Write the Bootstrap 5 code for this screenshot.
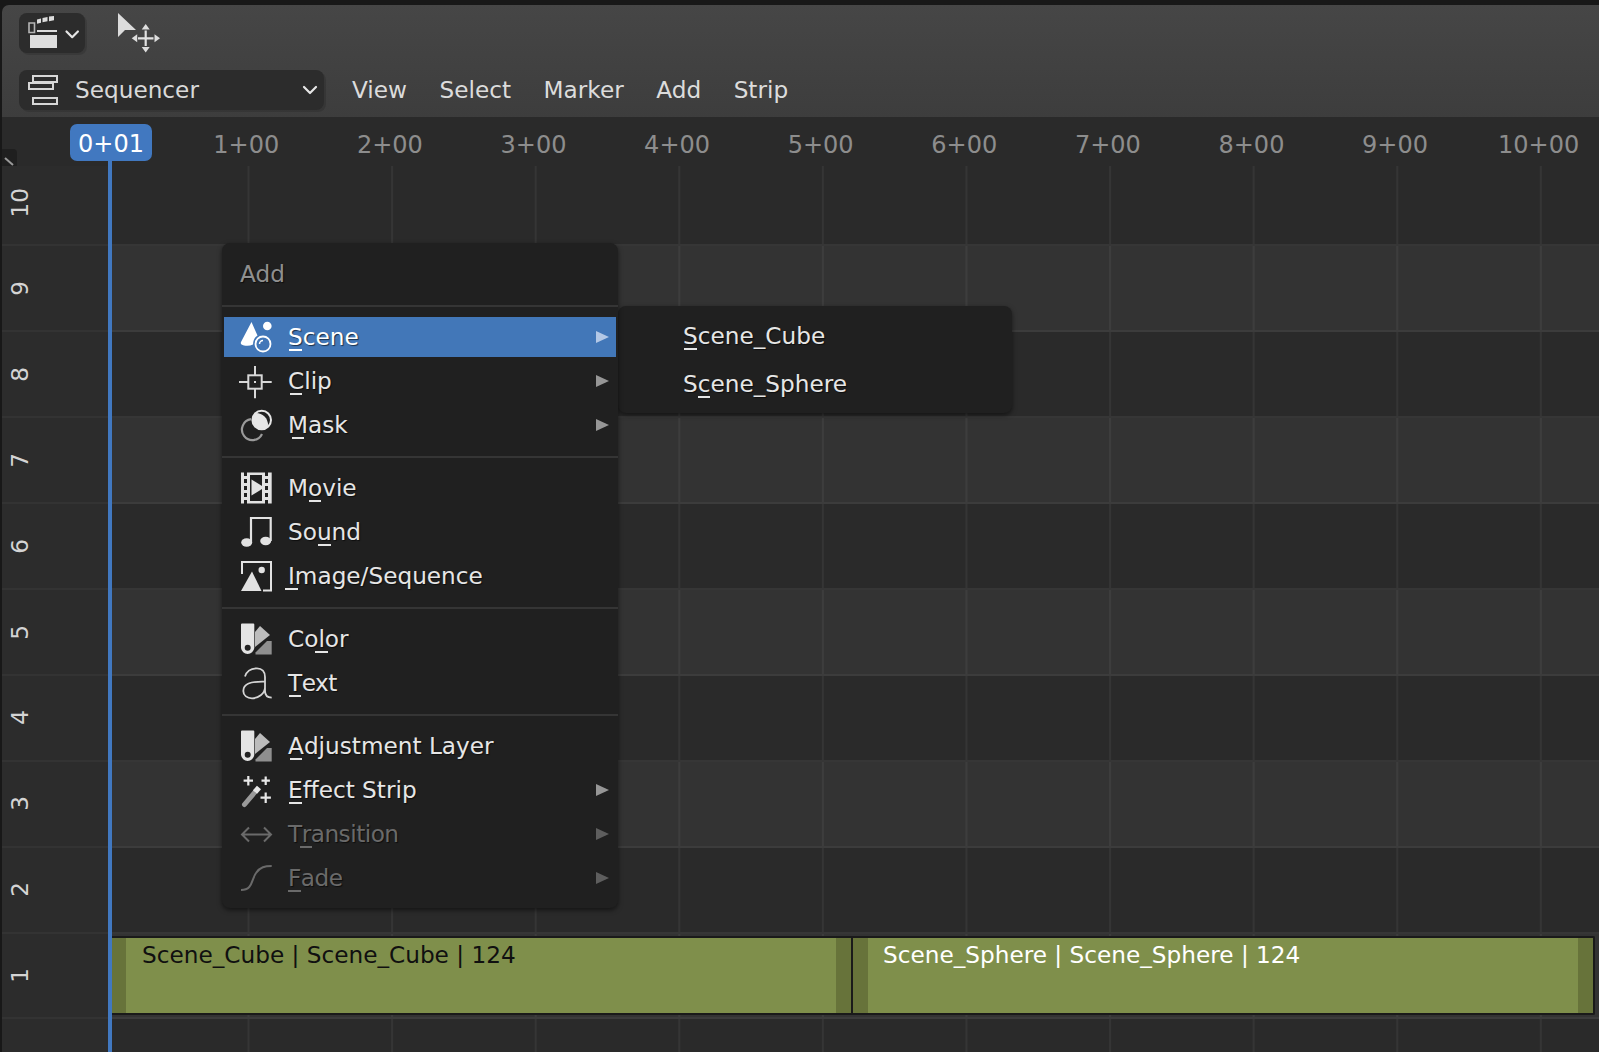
<!doctype html>
<html lang="en">
<head>
<meta charset="utf-8">
<title>Sequencer</title>
<link href="https://cdn.jsdelivr.net/npm/bootstrap@5.3.0/dist/css/bootstrap.min.css" rel="stylesheet">
<style>
html,body{height:100%;}
body{background:#181818;font-family:"DejaVu Sans",sans-serif;font-size:23.2px;line-height:1.2;overflow:hidden;color:#e6e6e6;}
.app{width:1599px;height:1052px;padding:5px 0 0 2px;position:relative;overflow:hidden;}
.hdr{height:112px;background:linear-gradient(#464646,#3d3d3d);border-radius:7px 0 0 0;padding:8px 0 0 17px;}
.hrow1{height:57px;}
.hrow2{height:40px;}
.ebtn{width:66px;height:40px;background:#2c2c2c;border-radius:8px;box-shadow:2px 2px 0 rgba(0,0,0,.13);padding-left:9px;}
.ebox{width:305px;height:40px;background:#2c2c2c;border-radius:8px;box-shadow:2px 2px 0 rgba(0,0,0,.13);padding:0 6px 0 9px;color:#d9d9d9;}
.ebox .lab{margin-left:11px;}
.mlist{margin-left:28px;gap:32.500px;color:#dcdcdc;}
.curs{margin-left:33px;}
.rul{height:49px;background:#2a2a2a;color:#8d8d8d;padding-left:172.500px;position:relative;z-index:2;white-space:nowrap;font-size:24px;}
.tick{flex:0 0 143.600px;text-align:center;padding-top:14px;}
.phbadge{position:absolute;left:68px;top:7px;width:82px;height:37px;background:#4178c0;border-radius:7px;color:#fff;text-align:center;line-height:41px;}
.corner{position:absolute;left:0;top:32px;width:15px;height:17px;background:#1f1f1f;border-top-right-radius:4px;}
.rows{height:886px;margin-top:-5.500px;}
.trow{height:85.9px;flex:0 0 85.9px;--band:#2a2a2a;--line:#363636;background:var(--band);}
.trow.alt{--band:#333333;--line:#3c3c3c;}
.chan{flex:0 0 106px;color:#d4d4d4;padding-left:4px;background:#2c2c2c;border-bottom:2px solid #333;}
.chan span{writing-mode:vertical-rl;transform:rotate(180deg);width:34px;text-align:center;}
.trk{flex:1;border-bottom:2px solid var(--line);background-image:linear-gradient(to right,rgba(255,255,255,.05) 2px,transparent 2px);background-size:143.600px 100%;background-position:139.500px 0;background-repeat:repeat-x;min-width:0;}
.play{position:absolute;left:108px;top:161px;bottom:0;width:4px;background:#4178c0;z-index:3;}
.strips{padding:2px 4px 0 3px;height:83px;}
.strip{height:79px;background:#7f8f4b;border:solid #1a1a1a;border-width:2px 0 2px 0;position:relative;}
.s1{flex:0 0 742px;color:#101010;border-right:2px solid #1a1a1a;}
.s1 .stxt{padding-left:16px;}
.s2{flex:1;color:#fff;border-right:2px solid #1a1a1a;border-radius:0 2px 2px 0;}
.hl{flex:0 0 15px;background:#67733a;}
.stxt{flex:1;padding:0 0 0 15px;line-height:33px;white-space:nowrap;overflow:hidden;}
.menu{position:absolute;left:222px;top:243px;width:396px;height:665px;background:#202020;border-radius:8px;box-shadow:0 2px 5px rgba(0,0,0,.55);z-index:5;padding:0 2px;}
.mtitle{height:53px;padding:8px 0 0 16px;line-height:46px;color:#8f8f8f;text-shadow:1px 1px 1px rgba(0,0,0,.6);}
.msep{height:19px;display:flex;align-items:center;margin:0 -2px;}
.msep::before{content:"";display:block;flex:1;height:2px;background:#353535;}
.mi{height:44px;padding:2px 0;position:relative;}
.mi>div{height:40px;padding:0 7px 0 16px;}
.mi.on>div{background:#4277b8;color:#fff;}
.mi svg.ic{flex:0 0 32px;width:32px;height:32px;overflow:visible;margin-right:16px;}
.mi .t{flex:1;text-shadow:1px 1px 1px rgba(0,0,0,.6);}
.mi .tight{letter-spacing:-.5px;}
.mi.off{color:#6a6a6a;}
.arr{width:0;height:0;border-style:solid;border-width:6.5px 0 6.5px 13px;border-color:transparent transparent transparent #969696;}
.mi.on .arr{border-left-color:#b3c8e6;}
.mi.off .arr{border-left-color:#5e5e5e;}
.ul{position:relative;display:inline-block;}
.ul::after{content:"";position:absolute;left:50%;bottom:0;width:12.5px;height:2px;margin-left:-6.25px;background:currentColor;}
.sub{position:absolute;left:618px;top:306px;width:394px;height:107px;background:#202020;border-radius:8px;box-shadow:0 2px 5px rgba(0,0,0,.55);z-index:4;padding:6px 0 0 65px;}
.si{height:48px;padding-top:10px;text-shadow:1px 1px 1px rgba(0,0,0,.6);}
</style>
</head>
<body>
<div class="app d-flex flex-column">
  <div class="hdr">
    <div class="hrow1 d-flex align-items-start">
      <div class="ebtn d-flex align-items-center">
        <svg width="52" height="34" viewBox="0 0 52 34">
          <path d="M1 7h5.500v9.500H1z" fill="none" stroke="#b5b5b5" stroke-width="1.600"/>
          <path d="M9 3.500l4-1v4.300l-4 1zM14.500 2l5-1v4.300l-5 1zM21 .5l5-.500v4.300l-5 1z" fill="#dcdcdc"/>
          <path d="M9 15h20" stroke="#dcdcdc" stroke-width="2"/>
          <rect x="2" y="19" width="27" height="13" fill="#dedede"/>
          <path d="M38.500 15.500l5.700 5.700 5.700-5.700" fill="none" stroke="#e6e6e6" stroke-width="2.200" stroke-linecap="round" stroke-linejoin="round"/>
        </svg>
      </div>
      <div class="curs">
        <svg width="44" height="44" viewBox="0 0 44 44" class="d-block">
          <path d="M0 0l18 17-11 0-7 7z" fill="#dcdcdc"/>
          <path d="M27.700 17.500v15.500M20 25.300h15.500" stroke="#e2e2e2" stroke-width="2.200"/>
          <path d="M27.700 11l4 5.500h-8zM27.700 39.500l4-5.500h-8zM13.700 25.300l5.500-4v8zM42 25.300l-5.500-4v8z" fill="#dedede"/>
        </svg>
      </div>
    </div>
    <div class="hrow2 d-flex align-items-center">
      <div class="ebox d-flex align-items-center">
        <svg width="36" height="32" viewBox="0 0 36 32">
          <path d="M5 2h24v6H5zM1 9h24v6H1zM5 24h24v6H5z" fill="none" stroke="#d6d6d6" stroke-width="2"/>
        </svg>
        <span class="lab flex-grow-1">Sequencer</span>
        <svg width="16" height="10" viewBox="0 0 16 10"><path d="M2 2l6 6 6-6" fill="none" stroke="#e6e6e6" stroke-width="2.200" stroke-linecap="round" stroke-linejoin="round"/></svg>
      </div>
      <div class="mlist d-flex">
        <span>View</span><span>Select</span><span>Marker</span><span>Add</span><span>Strip</span>
      </div>
    </div>
  </div>

  <div class="rul d-flex">
    <div class="tick">1+00</div><div class="tick">2+00</div><div class="tick">3+00</div><div class="tick">4+00</div><div class="tick">5+00</div><div class="tick">6+00</div><div class="tick">7+00</div><div class="tick">8+00</div><div class="tick">9+00</div><div class="tick">10+00</div>
    <div class="corner"><svg width="15" height="17" viewBox="0 0 15 17" class="d-block"><path d="M3 9l8 7" stroke="#9a9a9a" stroke-width="2"/></svg></div>
    <div class="phbadge">0+01</div>
  </div>

  <div class="rows d-flex flex-column">
    <div class="trow d-flex"><div class="chan d-flex align-items-center"><span>10</span></div><div class="trk"></div></div>
    <div class="trow alt d-flex"><div class="chan d-flex align-items-center"><span>9</span></div><div class="trk"></div></div>
    <div class="trow d-flex"><div class="chan d-flex align-items-center"><span>8</span></div><div class="trk"></div></div>
    <div class="trow alt d-flex"><div class="chan d-flex align-items-center"><span>7</span></div><div class="trk"></div></div>
    <div class="trow d-flex"><div class="chan d-flex align-items-center"><span>6</span></div><div class="trk"></div></div>
    <div class="trow alt d-flex"><div class="chan d-flex align-items-center"><span>5</span></div><div class="trk"></div></div>
    <div class="trow d-flex"><div class="chan d-flex align-items-center"><span>4</span></div><div class="trk"></div></div>
    <div class="trow alt d-flex"><div class="chan d-flex align-items-center"><span>3</span></div><div class="trk"></div></div>
    <div class="trow d-flex"><div class="chan d-flex align-items-center"><span>2</span></div><div class="trk"></div></div>
    <div class="trow alt d-flex"><div class="chan d-flex align-items-center"><span>1</span></div>
      <div class="trk">
        <div class="strips d-flex">
          <div class="strip s1 d-flex"><div class="hl"></div><div class="stxt">Scene_Cube | Scene_Cube | 124</div><div class="hl"></div></div>
          <div class="strip s2 d-flex"><div class="hl"></div><div class="stxt">Scene_Sphere | Scene_Sphere | 124</div><div class="hl"></div></div>
        </div>
      </div>
    </div>
    <div class="trow d-flex"><div class="chan"></div><div class="trk"></div></div>
  </div>

  <div class="play"></div>

  <div class="menu">
    <div class="mtitle">Add</div>
    <div class="msep"></div>
    <div class="mi on"><div class="d-flex align-items-center">
      <svg class="ic" viewBox="0 0 32 32"><path d="M11.500 1L1 21q-1 3 3 3.500 5 1 9-1 0-6 4.500-9z" fill="#fff"/><circle cx="27.300" cy="5" r="4.300" fill="#fff"/><circle cx="23" cy="23" r="7.500" fill="none" stroke="#fff" stroke-width="1.800"/><path d="M19.500 23a3.500 3.500 0 0 1 3.500-3.500" fill="none" stroke="#fff" stroke-width="1.500"/></svg>
      <span class="t"><span class="ul">S</span>cene</span><i class="arr"></i></div></div>
    <div class="mi"><div class="d-flex align-items-center">
      <svg class="ic" viewBox="0 0 32 32"><path d="M-1 17h9M22 17h9.700M15 1v9M15 24v9.300" stroke="#d8d8d8" stroke-width="2"/><rect x="8.300" y="10.300" width="13.400" height="13.400" fill="none" stroke="#d8d8d8" stroke-width="2"/><rect x="14" y="16" width="2" height="2" fill="#d8d8d8"/></svg>
      <span class="t"><span class="ul">C</span>lip</span><i class="arr"></i></div></div>
    <div class="mi"><div class="d-flex align-items-center">
      <svg class="ic" viewBox="0 0 32 32"><defs><clipPath id="mclip"><circle cx="16" cy="16" r="12"/></clipPath></defs><path d="M11 10.200A10.500 10.500 0 1 0 22 25" fill="none" stroke="#9a9a9a" stroke-width="2.200"/><circle cx="21.700" cy="11" r="9.300" fill="none" stroke="#e6e6e6" stroke-width="2"/><circle cx="21.700" cy="11" r="9" fill="#e6e6e6" clip-path="url(#mclip)"/></svg>
      <span class="t"><span class="ul">M</span>ask</span><i class="arr"></i></div></div>
    <div class="msep"></div>
    <div class="mi"><div class="d-flex align-items-center">
      <svg class="ic" viewBox="0 0 32 32"><path d="M1 .500h3V4h3V.500h3V31.500H7V28H4v3.500H1zM4 7v4h3V7zM4 14v4h3v-4zM4 21v4h3v-4zM22 .500h3V4h3V.500h3.700v31H28V28h-3v3.500h-3zM25 7v4h3V7zM25 14v4h3v-4zM25 21v4h3v-4z" fill="#e2e2e2" fill-rule="evenodd"/><path d="M10 .500h12V3H10zM10 29h12v2.500H10z" fill="#e2e2e2"/><path d="M11.500 7.500l13 8-13 8z" fill="#e2e2e2"/></svg>
      <span class="t">M<span class="ul">o</span>vie</span></div></div>
    <div class="mi"><div class="d-flex align-items-center">
      <svg class="ic" viewBox="0 0 32 32"><ellipse cx="6.700" cy="26.500" rx="5.500" ry="4.200" fill="#e2e2e2"/><ellipse cx="25.700" cy="25" rx="5.500" ry="4.200" fill="#e2e2e2"/><path d="M11 26V2h19.700v23" fill="none" stroke="#e2e2e2" stroke-width="2.200"/></svg>
      <span class="t">So<span class="ul">u</span>nd</span></div></div>
    <div class="mi"><div class="d-flex align-items-center">
      <svg class="ic" viewBox="0 0 32 32"><path d="M2 14V2h29v28.500h-8" fill="none" stroke="#e2e2e2" stroke-width="2"/><path d="M12 11.500L21.500 31H1z" fill="#e2e2e2"/><circle cx="21.700" cy="10" r="3.200" fill="#e2e2e2"/></svg>
      <span class="t"><span class="ul">I</span>mage/Sequence</span></div></div>
    <div class="msep"></div>
    <div class="mi"><div class="d-flex align-items-center">
      <svg class="ic" viewBox="0 0 32 32"><path d="M2 .500h11.300a1 1 0 0 1 1 1V25a6.700 6.700 0 0 1-13.300 0V1.500a1 1 0 0 1 1-1z" fill="#e4e4e4"/><circle cx="7.700" cy="24.700" r="3" fill="#222"/><path d="M20 3l10 9-15 12V9z" fill="#bcbcbc"/><path d="M15.500 31.500v-2L27 18h4.700v13.500z" fill="#8f8f8f"/></svg>
      <span class="t">Co<span class="ul">l</span>or</span></div></div>
    <div class="mi"><div class="d-flex align-items-center">
      <svg class="ic" viewBox="0 0 32 32"><path d="M5 9.500C7 3 13 1.300 17 1.300c5 0 8 3.500 8 8.700v14c0 4 2 6.500 6.700 6.700M25 14.700c-7 0-12-.3-16.500 1.800C5 18 3.300 21 3.300 24c0 4.500 4 7.300 8.700 7.300 6 0 13-4.500 13-11" fill="none" stroke="#d4d4d4" stroke-width="1.800"/></svg>
      <span class="t tight"><span class="ul">T</span>ext</span></div></div>
    <div class="msep"></div>
    <div class="mi"><div class="d-flex align-items-center">
      <svg class="ic" viewBox="0 0 32 32"><path d="M2 .500h11.300a1 1 0 0 1 1 1V25a6.700 6.700 0 0 1-13.300 0V1.500a1 1 0 0 1 1-1z" fill="#e4e4e4"/><circle cx="7.700" cy="24.700" r="3" fill="#222"/><path d="M20 3l10 9-15 12V9z" fill="#bcbcbc"/><path d="M15.500 31.500v-2L27 18h4.700v13.500z" fill="#8f8f8f"/></svg>
      <span class="t"><span class="ul">A</span>djustment Layer</span></div></div>
    <div class="mi"><div class="d-flex align-items-center">
      <svg class="ic" viewBox="0 0 32 32"><path d="M8.300 2v9.400M3.600 6.700h9.400M25.700 2.500v8.400M21.500 6.700h8.400M25.700 18.500v10.400M20.500 23.700h10.400" stroke="#e8e8e8" stroke-width="2.200"/><path d="M4.500 30.500L15 18" stroke="#9a9a9a" stroke-width="5" stroke-linecap="round"/><path d="M15 18l4-4.500" stroke="#e6e6e6" stroke-width="5.500"/></svg>
      <span class="t"><span class="ul">E</span>ffect Strip</span><i class="arr"></i></div></div>
    <div class="mi off"><div class="d-flex align-items-center">
      <svg class="ic" viewBox="0 0 32 32"><path d="M2 16.500h29M9 9.500l-7 7 7 7M24 9.500l7 7-7 7" fill="none" stroke="#6a6a6a" stroke-width="2"/></svg>
      <span class="t tight">T<span class="ul">r</span>ansition</span><i class="arr"></i></div></div>
    <div class="mi off"><div class="d-flex align-items-center">
      <svg class="ic" viewBox="0 0 32 32"><path d="M1 28c12 0 10-10 15-17 4-6 9-7 15.700-7" fill="none" stroke="#6a6a6a" stroke-width="2"/></svg>
      <span class="t tight"><span class="ul">F</span>ade</span><i class="arr"></i></div></div>
  </div>

  <div class="sub">
    <div class="si"><span class="ul">S</span>cene_Cube</div>
    <div class="si">S<span class="ul">c</span>ene_Sphere</div>
  </div>
</div>
</body>
</html>
